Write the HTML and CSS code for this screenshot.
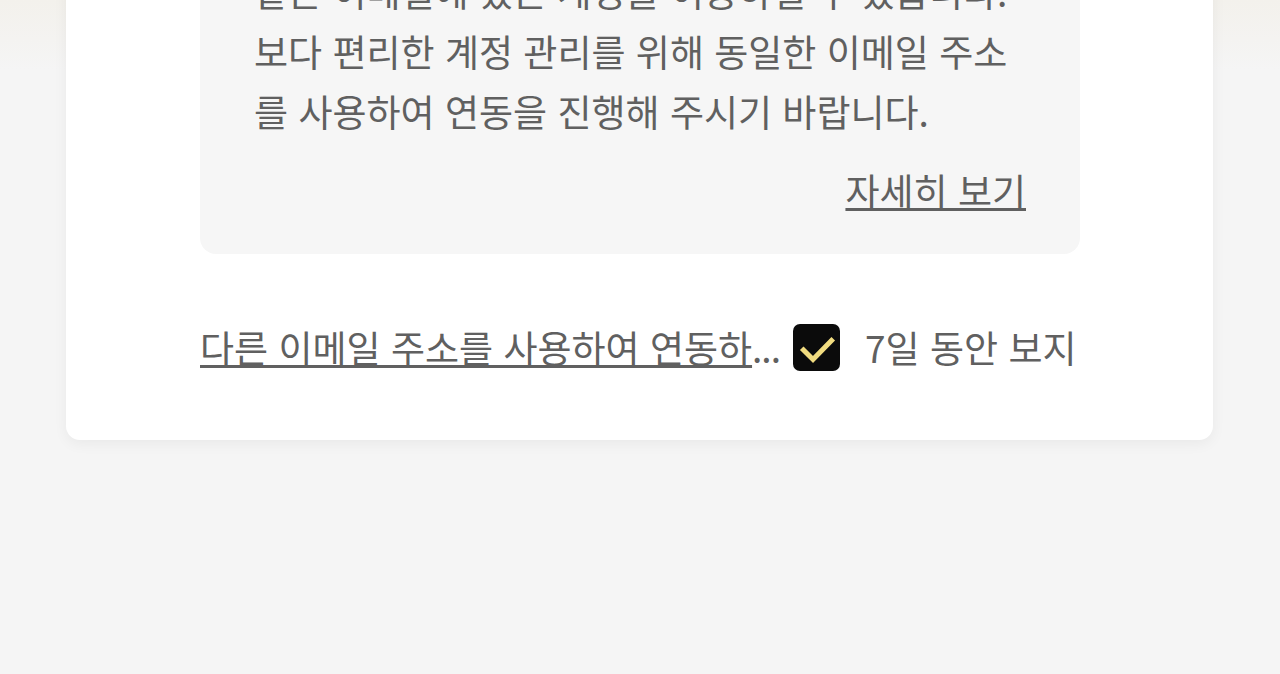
FILE: index.html
```html
<!DOCTYPE html>
<html lang="ko">
<head>
<meta charset="utf-8">
<title>계정 연동 안내</title>
<link rel="stylesheet" href="styles.css">
</head>
<body>
<div class="card">
  <div class="notice">
    <p class="notice-text">같은 이메일에 있는 계정을 이용하실 수 있습니다.<br>보다 편리한 계정 관리를 위해 동일한 이메일 주소<br>를 사용하여 연동을 진행해 주시기 바랍니다.</p>
    <div class="more-row"><a class="more" href="#">자세히 보기</a></div>
  </div>
  <div class="footer-row">
    <a class="other" href="#"><span class="other-text">다른 이메일 주소를 사용하여 연동하</span></a><span class="dots">...</span>
    <label class="check">
      <span class="box">
        <svg width="47" height="47" viewBox="0 0 47 47"><path d="M10.5 26 L20 35.5 L38.5 16.5" fill="none" stroke="#f1dc80" stroke-width="5" stroke-linecap="square" stroke-linejoin="miter"/></svg>
      </span>
      <span class="check-label">7일 동안 보지</span>
    </label>
  </div>
</div>
</body>
</html>
```

FILE: styles.css
```css
html, body {
  margin: 0;
  padding: 0;
}
body {
  width: 1280px;
  height: 674px;
  overflow: hidden;
  background: linear-gradient(#f3f1ec 0px, #f4f3f1 40px, #f5f5f5 70px);
  font-family: "Noto Sans CJK KR", "Noto Sans", sans-serif;
  color: #606060;
}
.card {
  margin: -119px 0 0 66px;
  width: 1147px;
  box-sizing: border-box;
  background: #ffffff;
  border-radius: 0 0 14px 14px;
  box-shadow: 0 4px 14px rgba(0, 0, 0, 0.05);
  padding: 40px 133px 63px 134px;
}
.notice {
  background: #f6f6f6;
  border-radius: 16px;
  padding: 40px 54px 34px;
}
.notice-text {
  margin: 0;
  font-size: 37px;
  line-height: 60px;
  white-space: nowrap;
}
.more-row {
  display: flex;
  justify-content: flex-end;
  margin-top: 19px;
  line-height: 60px;
}
.more {
  font-size: 37px;
  color: #606060;
  text-decoration: underline;
  text-decoration-thickness: 3px;
  text-underline-offset: 2px;
}
.footer-row {
  display: flex;
  align-items: center;
  margin-top: 63px;
  height: 60px;
  font-size: 37px;
}
.other {
  color: #606060;
  text-decoration: underline;
  text-decoration-thickness: 3px;
  text-underline-offset: 2px;
  white-space: nowrap;
}
.dots {
  margin-right: 13px;
  letter-spacing: -1px;
}
.check {
  display: flex;
  align-items: center;
  gap: 25px;
}
.box {
  width: 47px;
  height: 47px;
  border-radius: 7px;
  background: #0b0b0b;
  display: flex;
}
.check-label {
  white-space: nowrap;
}
```
